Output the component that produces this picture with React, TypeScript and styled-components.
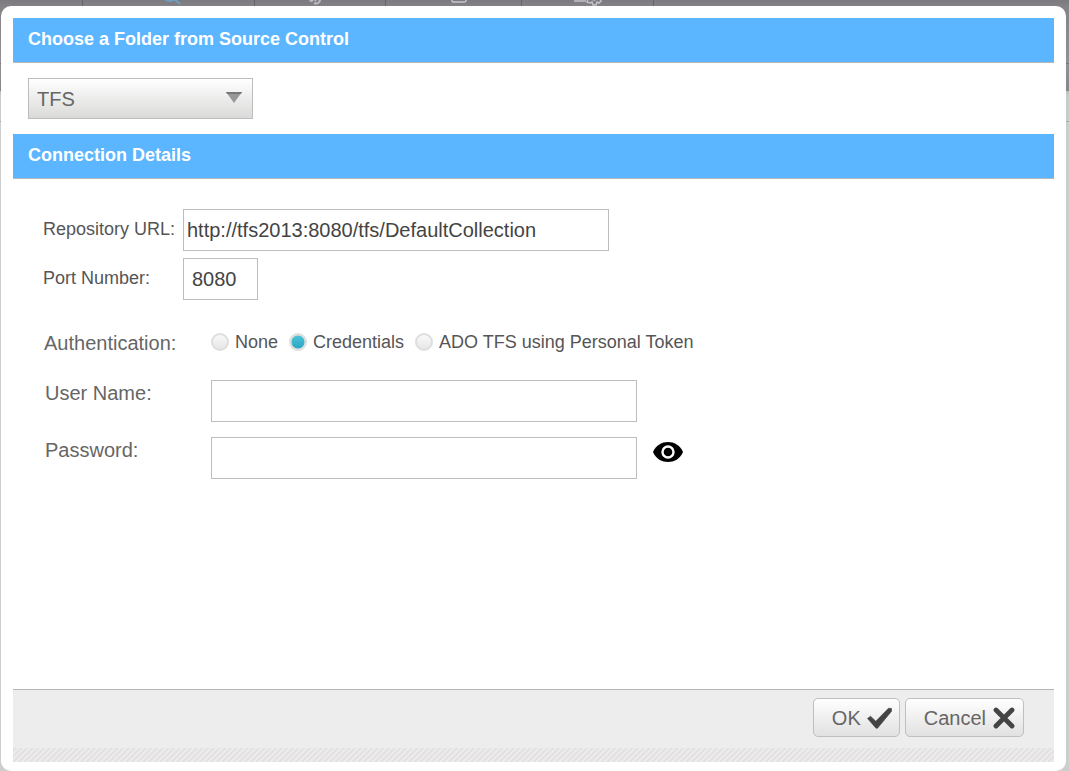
import React, { useState } from "react";
import styled, { createGlobalStyle } from "styled-components";

const GlobalStyle = createGlobalStyle`
  *, *::before, *::after { box-sizing: border-box; }
  body {
    margin: 0;
    background: #cdcdcd;
    font-family: "Liberation Sans", Arial, sans-serif;
    color: #555557;
  }
  button, input, select { font-family: inherit; margin: 0; }
`;

/* The dimmed page and the dialog share one grid cell, so the dialog lies over the page. */
const Page = styled.div`
  display: grid;
  grid-template: minmax(100vh, auto) / minmax(0, 1fr);
  > * { grid-area: 1 / 1; }
`;

const Backdrop = styled.div`
  display: flex;
  flex-direction: column;
`;

const Toolbar = styled.div`
  display: flex;
  height: 64px;
  background: linear-gradient(#7c7a7f, #858388 7px, #929095);
  border-bottom: 1px solid #77757a;
`;

const ToolbarCell = styled.div<{ $width: number }>`
  display: flex;
  justify-content: center;
  flex: 0 0 ${(p) => p.$width}px;
  border-right: 1px solid #66646a;
`;

const SubBar = styled.div`
  height: 27px;
  background: linear-gradient(#929095, #88868b);
`;

const TabStrip = styled.div`
  height: 31px;
  background: linear-gradient(#bebebe, #cbcbcb 5px);
  border-bottom: 1px solid #a9a9ab;
`;

const Dialog = styled.main`
  display: flex;
  flex-direction: column;
  margin: 6px 3px 0 1px;
  padding: 12px 12px 9px;
  border-radius: 10px;
  background: #fff;
`;

const SectionTitle = styled.h2`
  margin: 0;
  padding: 11px 15px 12px;
  border-bottom: 1px solid #b4b9bf;
  background: #5bb6ff;
  color: #fff;
  font-size: 18px;
  line-height: 21px;
  font-weight: bold;
`;

const SourcePicker = styled.div`
  padding: 15px;
`;

const SelectBox = styled.div`
  position: relative;
  width: 225px;
  svg {
    position: absolute;
    right: 11px;
    top: 14px;
    pointer-events: none;
  }
`;

const Select = styled.select`
  display: block;
  appearance: none;
  width: 100%;
  height: 41px;
  padding: 0 32px 0 8px;
  border: 1px solid #bdbdbf;
  border-radius: 0;
  background: linear-gradient(#ffffff, #dadad9);
  color: #666;
  font-size: 20px;
`;

const Form = styled.form`
  display: flex;
  flex-direction: column;
  flex: 1;
`;

const Fields = styled.div<{ $gap: number; $top: number }>`
  display: flex;
  flex-direction: column;
  gap: ${(p) => p.$gap}px;
  padding: ${(p) => p.$top}px 30px 0;
`;

const Row = styled.div`
  display: flex;
  align-items: center;
`;

const Label = styled.label`
  flex: 0 0 140px;
  padding-bottom: 2px;
  font-size: 18px;
  line-height: 22px;
  white-space: nowrap;
`;

const LoginLabel = styled.label`
  flex: 0 0 168px;
  align-self: flex-start;
  padding: 2px 0 0 2px;
  color: #666;
  font-size: 20px;
  line-height: 22px;
`;

const TextBox = styled.input<{ $width: number; $inset?: number }>`
  width: ${(p) => p.$width}px;
  height: 42px;
  padding: 0 ${(p) => p.$inset ?? 3}px;
  border: 1px solid #bdbdbf;
  border-radius: 0;
  background: #fff;
  color: #444;
  font-size: 20px;
`;

const AuthRow = styled.div`
  display: flex;
  align-items: center;
  padding: 31px 30px 0;
`;

const AuthLabel = styled.span`
  flex: 0 0 168px;
  padding: 2px 0 0 1px;
  color: #666;
  font-size: 20px;
  line-height: 20px;
`;

const RadioGroup = styled.div`
  display: flex;
  gap: 11px;
`;

const RadioLabel = styled.label`
  display: flex;
  align-items: center;
  gap: 6px;
  font-size: 18px;
  line-height: 20px;
`;

const Radio = styled.input.attrs({ type: "radio" })`
  appearance: none;
  width: 18px;
  height: 18px;
  border: 2px solid #dedede;
  border-radius: 50%;
  background: linear-gradient(#f9f9f9, #e6e6e5);
  &:checked {
    background: radial-gradient(circle, transparent 6px, #e3e1df 7px),
      linear-gradient(#58c6dc, #1fa2c0);
    background-origin: border-box;
  }
`;

const IconButton = styled.button`
  display: flex;
  margin-left: 16px;
  margin-bottom: 12px;
  padding: 0;
  border: 0;
  background: none;
  cursor: pointer;
`;

const Footer = styled.footer`
  margin-top: auto;
  border-top: 1px solid #b5b5b7;
  background: #ededed;
`;

const Actions = styled.div`
  display: flex;
  justify-content: flex-end;
  gap: 5px;
  padding: 8px 30px 11px;
`;

const ActionButton = styled.button`
  display: flex;
  align-items: center;
  gap: 6px;
  height: 39px;
  padding: 0 7px 0 18px;
  border: 1px solid #bfbfc1;
  border-radius: 5px;
  background: linear-gradient(#ffffff, #e1e1e1);
  color: #666;
  font-size: 20px;
  line-height: 22px;
`;

const Hatch = styled.div`
  height: 14px;
  background: repeating-linear-gradient(135deg, #f0eff0 0, #e0dddf 2px, #f0eff0 4px);
`;

const SearchGlyph = () => (
  <svg width="28" height="6" viewBox="-8 0 28 6" fill="none" stroke="#6f9dc0" strokeWidth="2">
    <path d="M2 -1Q6 3 12 -1M11 -1L17 4" />
  </svg>
);

const LinkGlyph = () => (
  <svg width="22" height="6" viewBox="0 0 22 6" fill="none" stroke="#bdbbc0" strokeWidth="2">
    <path d="M1 0Q2 2 4 0M9 -1Q13 0 9 3Q8 4 5 3M6 1L7 -1" />
  </svg>
);

const PageGlyph = () => (
  <svg width="28" height="6" viewBox="-10 0 28 6" fill="none" stroke="#c8c6ca">
    <path d="M2 -1V1Q2 2 4 2H14Q16 2 16 1V-1" strokeWidth="1.4" />
  </svg>
);

const GearGlyph = () => (
  <svg width="30" height="6" viewBox="0 0 30 6" fill="none" stroke="#c4c2c6" strokeWidth="1.5">
    <path d="M1 1H13M15 -1L14 2L17 3L19 2L20 5H23L24 2L26 3L28 1L27 -1M19 -1Q21 1 23 -1" />
  </svg>
);

const EyeIcon = () => (
  <svg width="30" height="20" viewBox="0 0 30 20">
    <path d="M0 10C3 3 9 0 15 0S27 3 30 10C27 17 21 20 15 20S3 17 0 10Z" fill="#000" />
    <circle cx="15" cy="10" r="5.5" fill="#000" stroke="#fff" strokeWidth="2.4" />
  </svg>
);

const CheckIcon = () => (
  <svg width="25" height="22" viewBox="0 0 25 22">
    <path
      d="M0.5 11.5L3.5 9.2L8.8 14.2L21.5 1.2L24.6 1.6V4.2L10.5 21.2H9Z"
      fill="#444"
      stroke="#444"
      strokeWidth="0.6"
      strokeLinejoin="round"
    />
  </svg>
);

const CrossIcon = () => (
  <svg width="24" height="22" viewBox="0 0 24 22">
    <path
      d="M4 3L20 19M20 3L4 19"
      fill="none"
      stroke="#444"
      strokeWidth="4.8"
      strokeLinecap="round"
    />
  </svg>
);

const authModes = ["None", "Credentials", "ADO TFS using Personal Token"];

export default function App() {
  const [mode, setMode] = useState("Credentials");
  const [revealed, setRevealed] = useState(false);

  return (
    <>
      <GlobalStyle />
      <Page>
        <Backdrop aria-hidden="true">
          <Toolbar>
            <ToolbarCell $width={83} />
            <ToolbarCell $width={172}><SearchGlyph /></ToolbarCell>
            <ToolbarCell $width={131}><LinkGlyph /></ToolbarCell>
            <ToolbarCell $width={136}><PageGlyph /></ToolbarCell>
            <ToolbarCell $width={132}><GearGlyph /></ToolbarCell>
          </Toolbar>
          <SubBar />
          <TabStrip />
        </Backdrop>
        <Dialog role="dialog" aria-labelledby="dialog-title">
          <SectionTitle id="dialog-title">Choose a Folder from Source Control</SectionTitle>
          <SourcePicker>
            <SelectBox>
              <Select aria-label="Source control" defaultValue="TFS">
                <option>TFS</option>
              </Select>
              <svg width="16" height="11" viewBox="0 0 16 11">
                <path d="M0 0H16L8 11Z" fill="#989898" />
                <path d="M0 0H16L15 2H1Z" fill="#777" />
              </svg>
            </SelectBox>
          </SourcePicker>
          <SectionTitle>Connection Details</SectionTitle>
          <Form onSubmit={(e) => e.preventDefault()}>
            <Fields $gap={7} $top={30}>
              <Row>
                <Label htmlFor="url">Repository URL:</Label>
                <TextBox id="url" $width={426} defaultValue="http://tfs2013:8080/tfs/DefaultCollection" />
              </Row>
              <Row>
                <Label htmlFor="port">Port Number:</Label>
                <TextBox id="port" $width={75} $inset={8} defaultValue="8080" />
              </Row>
            </Fields>
            <AuthRow>
              <AuthLabel id="auth-label">Authentication:</AuthLabel>
              <RadioGroup role="radiogroup" aria-labelledby="auth-label">
                {authModes.map((m) => (
                  <RadioLabel key={m}>
                    <Radio name="auth" checked={mode === m} onChange={() => setMode(m)} />
                    {m}
                  </RadioLabel>
                ))}
              </RadioGroup>
            </AuthRow>
            <Fields $gap={15} $top={27}>
              <Row>
                <LoginLabel htmlFor="user">User Name:</LoginLabel>
                <TextBox id="user" $width={426} />
              </Row>
              <Row>
                <LoginLabel htmlFor="password">Password:</LoginLabel>
                <TextBox id="password" type={revealed ? "text" : "password"} $width={426} />
                <IconButton type="button" aria-label="Show password" onClick={() => setRevealed(!revealed)}>
                  <EyeIcon />
                </IconButton>
              </Row>
            </Fields>
            <Footer>
              <Actions>
                <ActionButton type="submit">OK <CheckIcon /></ActionButton>
                <ActionButton type="button">Cancel <CrossIcon /></ActionButton>
              </Actions>
              <Hatch />
            </Footer>
          </Form>
        </Dialog>
      </Page>
    </>
  );
}
